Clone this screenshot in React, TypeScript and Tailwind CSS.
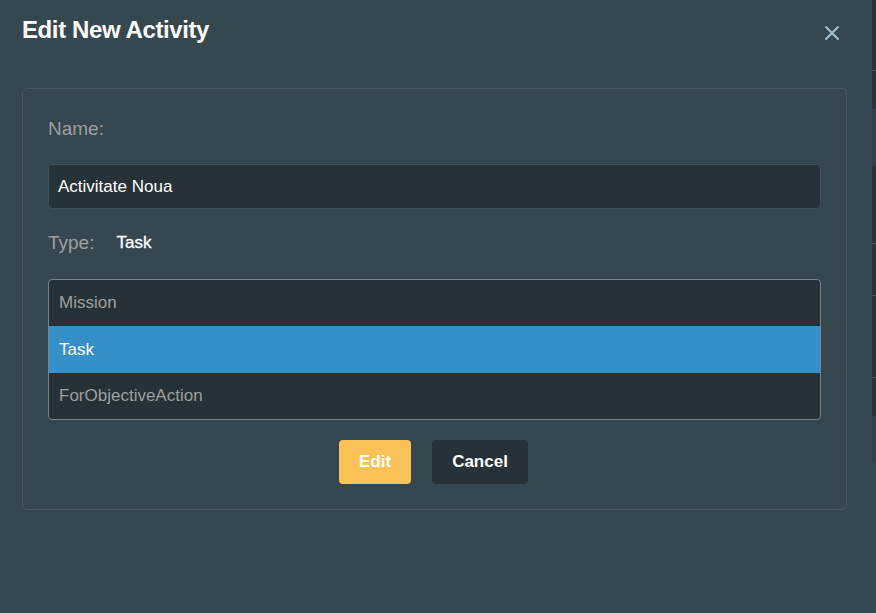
import { X } from 'lucide-react';

const types = ['Mission', 'Task', 'ForObjectiveAction'];

const EditActivityModal = () => {
  const selected = 'Task';

  return (
    <div className="flex h-[613px] w-[876px] overflow-hidden bg-[#37474f] font-['Liberation_Sans',Arial,sans-serif]">
      <div className="w-[872px] shrink-0">
        {/* Header */}
        <div className="flex h-[62px] items-start justify-between pl-[22px] pr-[28px] pt-[15px]">
          <h1 className="text-[24px] font-bold leading-[30px] tracking-[-0.4px] text-white">Edit New Activity</h1>
          <button className="mt-[6px] text-[#a9c3d2]">
            <X className="h-[24px] w-[24px]" strokeWidth={1.8} />
          </button>
        </div>

        {/* Body */}
        <div className="mx-[22px] mt-[26px] w-[825px] rounded-[5px] border border-[#4b5a62] px-[25px] pb-[25px] pt-[29px]">
          <label className="block text-[19px] leading-[22px] text-[#9e9e9e]">Name:</label>
          <input
            defaultValue="Activitate Noua"
            className="mt-[24px] block h-[45px] w-full rounded-[4px] border border-[#3f4f57] bg-[#263238] px-[9px] text-[17px] text-white outline-none"
          />

          <div className="mt-[22px] flex items-center">
            <span className="text-[19px] leading-[24px] text-[#9e9e9e]">Type:</span>
            <span className="ml-[22px] text-[17px] leading-[22px] text-white [-webkit-text-stroke:0.3px_white]">{selected}</span>
          </div>

          <div className="mt-[24px] overflow-hidden rounded-[4px] border border-[#75848b] bg-[#263238]">
            {types.map((t) => (
              <div
                key={t}
                className={
                  t === selected
                    ? 'flex h-[46.34px] items-center bg-[#3690c7] px-[10px] text-[17px] text-white'
                    : 'flex h-[46.34px] items-center px-[10px] text-[17px] text-[#9e9e9e]'
                }
              >
                {t}
              </div>
            ))}
          </div>

          <div className="mt-[20px] flex justify-center gap-[21px] pr-[2px]">
            <button className="h-[44px] w-[72px] rounded-[4px] bg-[#fbc257] text-[17px] font-bold text-white">Edit</button>
            <button className="h-[44px] w-[96px] rounded-[4px] bg-[#263238] text-[17px] font-bold text-white">Cancel</button>
          </div>
        </div>
      </div>

      {/* page behind the dialog */}
      <div className="flex w-[4px] flex-col">
        <div className="h-[70px] bg-[#29353b]" />
        <div className="h-px bg-[#4a565c]" />
        <div className="h-[38px] bg-[#29353b]" />
        <div className="h-[57px] bg-[#33424a]" />
        <div className="h-[77px] bg-[#29353b]" />
        <div className="h-px bg-[#4a565c]" />
        <div className="h-[51px] bg-[#29353b]" />
        <div className="h-px bg-[#4a565c]" />
        <div className="h-[81px] bg-[#29353b]" />
        <div className="h-px bg-[#4a565c]" />
        <div className="h-[38px] bg-[#29353b]" />
        <div className="h-[45px] bg-[#33424a]" />
        <div className="flex-1 bg-[#37474f]" />
      </div>
    </div>
  );
};

export default function App() {
  return <EditActivityModal />;
}
